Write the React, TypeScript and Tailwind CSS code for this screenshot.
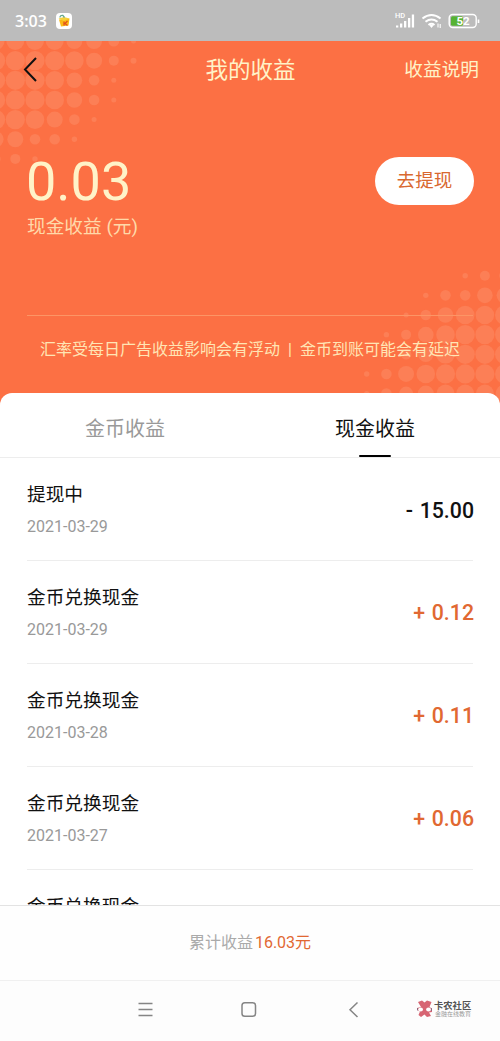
import { clsx } from "clsx";

interface EarningRecord {
  title: string;
  date?: string;
  amount?: string;
  withdraw?: boolean;
}

const records: EarningRecord[] = [
  { title: "提现中", date: "2021-03-29", amount: "- 15.00", withdraw: true },
  { title: "金币兑换现金", date: "2021-03-29", amount: "+ 0.12" },
  { title: "金币兑换现金", date: "2021-03-28", amount: "+ 0.11" },
  { title: "金币兑换现金", date: "2021-03-27", amount: "+ 0.06" },
  { title: "金币兑换现金" },
];

// dot radii, one array per row of the halftone pattern
const topDots = [
  [9, 9, 9, 9, 8, 8, 5.5, 2.5],
  [9.6, 9.6, 9.6, 9.6, 9.3, 8, 5, 3],
  [9.6, 9.6, 9.6, 9.3, 7.8, 5.3, 2.5],
  [9.6, 9.6, 9.6, 9.3, 7.8, 5.3, 2.5],
  [9.6, 9.6, 9.3, 8, 5.3, 2.5],
  [8, 8, 5.3, 5.3, 2.7],
  [5, 5, 2.7],
];

const bottomDots = [
  [0, 0, 0, 0, 0, 2.7, 5, 5.3],
  [0, 0, 0, 2.7, 5.3, 5.3, 7.8, 8],
  [0, 0, 2.5, 5.3, 7.8, 9.3, 9.3, 9.6],
  [0, 2.7, 5, 7.8, 9.3, 9.6, 9.6, 9.6],
  [0, 2.7, 5.3, 7.8, 9.3, 9.6, 9.6, 9.6],
  [2.7, 5.3, 8, 9.3, 9.6, 9.6, 9.6, 9.6],
  [2.7, 5.3, 7, 8, 9, 9, 9, 9],
];

function Dots({ rows, x, y }: { rows: number[][]; x: number; y: number }) {
  return (
    <g fill="#fc7f56">
      {rows.map((row, j) =>
        row.map((r, i) => (
          <circle key={`${j}-${i}`} cx={x + i * 19.7} cy={y + j * 19.65} r={r} />
        )),
      )}
    </g>
  );
}

function StatusBar() {
  return (
    <div className="h-[41px] bg-[#bcbcbc] flex items-center justify-between pl-[15px] pr-[18px]">
      <div className="flex items-center gap-[8px]">
        <span className="font-['Open_Sans'] font-semibold text-[16px] leading-5 text-white w-[33px] whitespace-nowrap">
          3:03
        </span>
        <svg width="16" height="16" viewBox="0 0 16 16">
          <rect width="16" height="16" rx="4" fill="#fff" />
          <path d="M3 6.500L13.500 5.500L12.500 12.500L5 13.500Z" fill="#fbbb16" />
          <path d="M2.500 5.500L8 4L13.500 5.500L8 8Z" fill="#f6d13a" />
          <path d="M4 4.500Q4 2 7 2.500L8.500 4.500" fill="none" stroke="#65a98d" strokeWidth="1.300" />
          <path d="M8 8.500V12.500M11.500 8L9 10.500L11.500 12.500" fill="none" stroke="#e3521b" strokeWidth="1.300" />
        </svg>
      </div>
      <svg width="88" height="20" viewBox="0 0 88 20" fill="none">
        <text x="1" y="7" fill="#fff" className="font-['Roboto'] font-medium text-[7.500px]">
          HD
        </text>
        <g fill="#fff">
          <rect x="2" y="14.500" width="2.300" height="2" />
          <rect x="6" y="12.500" width="2.300" height="4" />
          <rect x="10" y="10" width="2.300" height="6.500" />
          <rect x="14" y="7" width="2.300" height="9.500" />
          <rect x="17.800" y="3.500" width="2.300" height="13" />
        </g>
        <g stroke="#fff" strokeWidth="2">
          <path d="M28.500 7.500Q37.500 0.500 46.500 7.500" />
          <path d="M31.500 10.800Q37.500 6.300 43.500 10.800" />
          <path d="M34.500 14Q37.500 11.600 40.500 14" />
        </g>
        <path d="M35.500 14.500Q37.500 13 39.500 14.500L37.500 17Z" fill="#fff" />
        <path d="M44 12.500V16.500M46.200 13V17" stroke="#fff" strokeWidth="1.100" />
        <rect x="55.200" y="3.500" width="27" height="13" rx="3.500" stroke="#fff" strokeWidth="1.400" />
        <rect x="57" y="5.300" width="12" height="9.400" rx="1.500" fill="#56b233" />
        <path d="M84.500 8.500V12" stroke="#fff" strokeWidth="1.600" />
        <text x="69" y="14.200" textAnchor="middle" fill="#fff" className="font-['Roboto'] font-bold text-[11.500px]">
          52
        </text>
      </svg>
    </div>
  );
}

function EarningsHeader() {
  return (
    <header className="relative h-[364px] bg-[#fc7044] text-[#fff3c8]">
      <svg className="absolute inset-0" width="500" height="364" viewBox="0 41 500 364">
        <Dots rows={topDots} x={-4.4} y={41} />
        <Dots rows={bottomDots} x={366.7} y={275.7} />
      </svg>
      <div className="relative">
        <div className="h-[58px] flex items-center justify-between pl-[22px] pr-[21px]">
          <div className="flex-1 pb-[3px]">
            <svg width="18" height="26" viewBox="0 0 18 26" fill="none" stroke="#111" strokeWidth="2">
              <path d="M14 2L3 13.500L14 25" />
            </svg>
          </div>
          <h1 className="text-[22.500px] leading-8">我的收益</h1>
          <div className="flex-1 pt-px text-right text-[18.700px]">收益说明</div>
        </div>
        <div className="mt-[52px] px-[27px] flex justify-between">
          <div className="mt-[4px]">
            <div className="text-[54px] leading-[54px] -ml-[1px]">0.03</div>
            <div className="mt-[4px] text-[18.700px] leading-7 text-[#ffd9a9]">现金收益 (元)</div>
          </div>
          <button className="mt-[6px] -mr-px w-[99px] h-[48px] pt-[2px] rounded-full bg-white text-[18.500px] text-[#d96830]">
            去提现
          </button>
        </div>
        <div className="mx-[27px] mt-[74px] border-t border-[#fd9565]" />
        <p className="mt-[22px] text-center text-[16px] leading-6 whitespace-pre text-[#ffe5b5]">
          汇率受每日广告收益影响会有浮动{"  |  "}金币到账可能会有延迟
        </p>
      </div>
    </header>
  );
}

function EarningTabs() {
  return (
    <div className="h-[65px] shrink-0 grid grid-cols-2 border-b border-[#ededed] text-[20px]">
      <div className="pt-[22px] text-center leading-7 text-[#999]">金币收益</div>
      <div className="pt-[22px] flex flex-col items-center justify-between leading-7 text-[#111]">
        现金收益
        <div className="w-[32px] h-[2.500px] rounded-full bg-black" />
      </div>
    </div>
  );
}

function RecordRow({ record }: { record: EarningRecord }) {
  return (
    <div className="h-[102.900px] shrink-0 mx-[27px] flex justify-between border-b border-[#ededed]">
      <div className="pt-[23px]">
        <div className="text-[18.700px] leading-7 text-[#111]">{record.title}</div>
        <div className="mt-[6.300px] text-[16px] leading-6 text-[#999]">{record.date}</div>
      </div>
      <div
        className={clsx(
          "-mr-px pt-[38.500px] text-[21.300px] leading-7 font-medium [word-spacing:1.5px]",
          record.withdraw ? "text-[#111]" : "text-[#e16832]",
        )}
      >
        {record.amount}
      </div>
    </div>
  );
}

function NavigationBar() {
  return (
    <nav className="h-[61px] flex border-t border-[#f0f0f0] bg-[#fdfdfd]">
      <svg width="400" height="59" viewBox="0 0 400 59" fill="none" stroke="#858585" strokeWidth="1.500">
        <path d="M138.500 22.500H152.500M138.500 28.500H152.500M138.500 34.500H152.500" />
        <rect x="242" y="21.700" width="13.500" height="13.500" rx="2.800" />
        <path d="M357.500 21.500L350 28.700L357.500 36" />
      </svg>
      <div className="pl-[17px] pt-[19px] flex gap-[2px]">
        <svg width="15" height="18" viewBox="0 0 15 18">
          <path d="M1 2L5 0.500L7.500 2.500L10 0.500L14.500 2L12.500 7L15 8.500V12L12 12.500L14 16L10 17L7.500 14.500L4 17L1.500 15L3 11.500L0 10V8L4 7Z" fill="#d76573" />
          <ellipse cx="3.600" cy="9.500" rx="2.400" ry="2.100" fill="#fff" />
          <ellipse cx="11.500" cy="9.500" rx="2.400" ry="2.100" fill="#fff" />
          <path d="M0 8V10.500M15 8V11" stroke="#456983" />
        </svg>
        <div className="whitespace-nowrap">
          <div className="text-[9.300px] leading-[11px] font-bold text-[#555]">卡农社区</div>
          <div className="ml-px text-[6px] leading-[6px] text-[#999]">金融在线教育</div>
        </div>
      </div>
    </nav>
  );
}

export default function App() {
  return (
    <div className="w-[500px] h-[1041px] flex flex-col overflow-hidden bg-white font-['Roboto','Noto_Sans_CJK_SC',sans-serif]">
      <StatusBar />
      <EarningsHeader />
      <main className="relative -mt-[12px] h-[512px] flex flex-col overflow-hidden rounded-t-[12px] bg-white">
        <EarningTabs />
        {records.map((record, index) => (
          <RecordRow key={index} record={record} />
        ))}
      </main>
      <footer className="h-[75px] pb-px flex items-center justify-center gap-[2px] border-t border-[#e3e3e3] bg-[#fefefe] text-[16px]">
        <span className="text-[#aaa]">累计收益</span>
        <span className="text-[#e16832]">16.03元</span>
      </footer>
      <NavigationBar />
    </div>
  );
}
